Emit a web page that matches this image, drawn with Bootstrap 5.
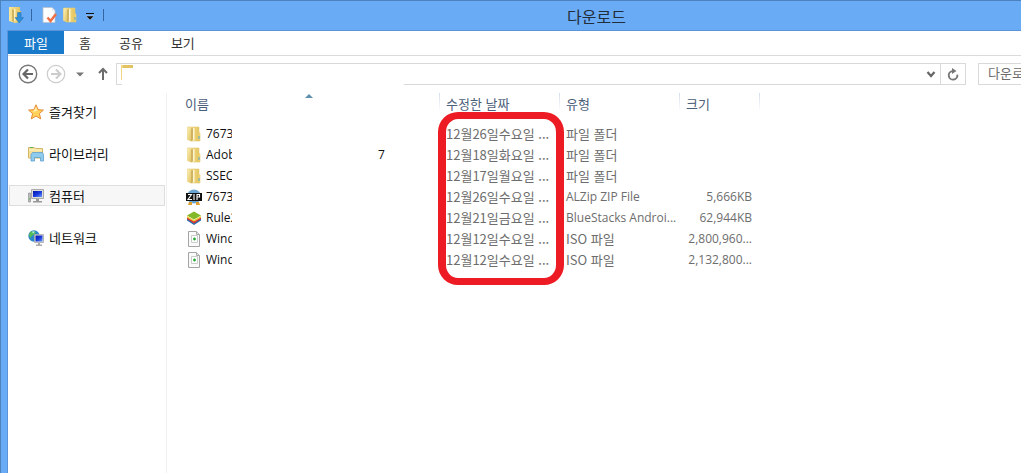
<!DOCTYPE html>
<html lang="ko">
<head>
<meta charset="utf-8">
<meta name="viewport" content="width=device-width, initial-scale=1">
<title>다운로드</title>
<link href="https://cdn.jsdelivr.net/npm/bootstrap@5.3.0/dist/css/bootstrap.min.css" rel="stylesheet">
<style>
  body { font: 13px/21px "Noto Sans CJK KR", sans-serif; color: #111; overflow: hidden; }
  .latin { font-family: "Open Sans", "Noto Sans CJK KR", sans-serif; font-size: 12px; }
  .explorer { background: #6aabf6; border-top: 1px solid #4c82bd; border-left: 1px solid #4c82bd; padding-left: 6px; }
  .titlebar { height: 29px; padding-left: 1px; }
  .titlebar h1 { font-size: 16px; font-weight: 400; line-height: 26px; color: #222d3a; padding-left: 457px; }
  .titlebar svg, .sidebar svg, .files svg, .toolbar svg { display: block; flex: none; }
  .quick { padding-bottom: 1px; }
  .quick-divider { width: 1px; height: 12px; margin: 0 6px 0 7px; background: #35669f; }
  .quick button + .quick-divider { margin-left: 5px; }
  .quick button, .toolbar button { border: 0; background: none; padding: 0; }
  .pane { border-left: 1px solid #5b94d8; border-top: 1px solid #5b94d8; }
  .ribbon { height: 25px; border-bottom: 1px solid #dadbdc; }
  .ribbon button { border: 0; background: none; padding: 0; height: 23px; line-height: 20px; color: #333; }
  .ribbon .file-tab { width: 56px; background: #1979ca; color: #fff; }
  .ribbon .first-tab { margin-left: 15px; }
  .toolbar { height: 37px; padding: 7px 0 8px 10px; }
  .toolbar .recent { margin: 0 14px 0 10px; }
  .address { height: 22px; border: 1px solid #d9d9d9; }
  .address input { border: 0; outline: 0; background: none; min-width: 0; }
  /* blanked part of the path */
  .address::after { content: ""; position: absolute; left: 5px; top: 4px; bottom: -1px; width: 282px; background: #fff; }
  .address .refresh { width: 25px; border-left: 1px solid #d9d9d9; }
  .searchbox { width: 43px; height: 22px; margin-left: 12px; border: 1px solid #d9d9d9; border-right: 0; padding: 0 0 3px 9px; color: #6d6d6d; outline: 0; }
  .searchbox::placeholder { color: #6d6d6d; opacity: 1; }
  .sidebar { width: 159px; border-right: 1px solid #f1f1f1; padding: 8px 1px 0 1px; gap: 21px; }
  .sidebar a { height: 21px; line-height: 19px; border: 1px solid transparent; padding-left: 18px; gap: 5px; color: #111; text-decoration: none; }
  .sidebar a.current { background: #f7f7f7; border-color: #dedede; }
  .files { table-layout: fixed; width: 593px; }
  .files th, .files td { padding: 0 8px 2px 6px; white-space: nowrap; }
  .files th { height: 31px; padding-bottom: 10px; font-weight: 400; color: #4c607a; background: linear-gradient(#d5dfeb, #fff) right top / 1px 19px no-repeat; }
  .files td { height: 21px; line-height: 19px; color: #6d6d6d; }
  .files td:last-child { padding-left: 0; }
  .files td.latin { padding-right: 2px; }
  .files td.latin.text-end { padding-right: 8px; }
  .files th:first-child { padding-left: 18px; }
  .files td:first-child { padding-left: 19px; color: #111; }
  .sort-mark { left: 138px; top: 1px; }
  .file-name { width: 26px; overflow: hidden; }
  .file-tail { margin-left: 142px; }
  .highlight { left: 271px; top: 19px; width: 126px; height: 173px; border: solid #ed1c24; border-width: 7px 8px; border-radius: 20px; pointer-events: none; }
</style>
</head>
<body>
<svg width="0" height="0" class="position-absolute" aria-hidden="true">
  <defs>
    <linearGradient id="gold"><stop offset="0" stop-color="#f8e69b"/><stop offset="1" stop-color="#e3c25a"/></linearGradient>
    <linearGradient id="flap" y2="1"><stop offset="0" stop-color="#fbf0b4"/><stop offset="1" stop-color="#e2c362"/></linearGradient>
    <linearGradient id="screen" x2="1" y2="1"><stop offset="0" stop-color="#0716a8"/><stop offset=".5" stop-color="#1838dd"/><stop offset="1" stop-color="#6b9cf5"/></linearGradient>
    <symbol id="folder" viewBox="0 0 16 16">
      <path d="M1.500 1H13v5.500l1 .5v8H5l-3.500-1.500z" fill="url(#gold)" stroke="#e3c974" stroke-width=".6"/>
      <path d="M1.500 1.500H5V15l-3.500-1.500z" fill="url(#flap)"/><path d="M5 2.500L7 2v11.500L5 15.500z" fill="#cfb360"/>
      <path d="M7 2h1.500v12.500H7z" fill="#fdf6d4"/>
      <path d="M12.500 7H14v7h-1.500z" fill="#eed272"/><path d="M12.500 10h1v3h-1z" fill="#55a5d0"/>
    </symbol>
    <symbol id="disc" viewBox="0 0 16 16">
      <path d="M2.500.5h8l3 3v12h-11z" fill="#fafafa" stroke="#a5a5a5"/><path d="M10.500.5v3h3" fill="#ddd" stroke="#aaa"/>
      <path d="M5.500 4.500h6v7h-6z" fill="#fff" stroke="#ccc"/><path d="M7 8h3M8.500 6.500v3" stroke="#2eab3b" stroke-width="1.300"/>
    </symbol>
  </defs>
</svg>

<div class="explorer min-vh-100 d-flex flex-column">
  <header class="titlebar d-flex align-items-center">
    <div class="quick d-flex align-items-center">
      <svg width="16" height="18" viewBox="0 0 16 18"><path d="M1 1h11v4h1v11l-6 1-6-2z" fill="url(#gold)"/><path d="M4 3l2 1v12l-2-1z" fill="#cfb360"/><path d="M6 3h1.500v12H6z" fill="#fbf0bb"/><path d="M9.500 6.500h3.500v5h2.500L11.200 17 7 11.500h2.500z" fill="#2d8fdc" stroke="#1c6cb0" stroke-width=".5"/></svg>
      <span class="quick-divider"></span>
      <button class="ms-1" aria-label="속성"><svg width="16" height="16" viewBox="0 0 16 16"><path d="M1 .5h9l3 3v12H1z" fill="#fdfdfd" stroke="#b9c3ce" stroke-width=".8"/><path d="M10 .5v3h3" fill="#dde3ea"/><path d="M5.500 10.500l3 3.500 5.500-7" fill="none" stroke="#ef7046" stroke-width="2.500"/></svg></button>
      <button class="ms-1" aria-label="새 폴더"><svg width="16" height="16"><use href="#folder"/></svg></button>
      <button class="ms-1 pt-1" aria-label="빠른 실행 도구 모음"><svg width="16" height="8" viewBox="0 0 16 8"><path d="M4 .5h8" stroke="#111"/><path d="M4 3h8L8 7z" fill="#111" stroke="#dbeafa" stroke-width=".4"/></svg></button>
      <span class="quick-divider"></span>
    </div>
    <h1 class="m-0 text-nowrap">다운로드</h1>
  </header>

  <div class="pane bg-white flex-grow-1 d-flex flex-column">
    <nav class="ribbon d-flex" aria-label="리본">
      <button class="file-tab">파일</button>
      <button class="first-tab">홈</button>
      <button class="ms-4 ps-1">공유</button>
      <button class="ms-4 ps-1">보기</button>
    </nav>

    <div class="toolbar d-flex align-items-center">
      <button aria-label="뒤로"><svg width="20" height="20" viewBox="0 0 20 20" fill="none"><circle cx="10" cy="10" r="8.700" stroke="#777" stroke-width="1.400"/><path d="M15 10H6M10 5.500L5.500 10l4.500 4.500" stroke="#666" stroke-width="2.200"/></svg></button>
      <button class="ms-2" aria-label="앞으로"><svg width="20" height="20" viewBox="0 0 20 20" fill="none"><circle cx="10" cy="10" r="8.700" stroke="#ccc" stroke-width="1.200"/><path d="M5 10h9M10 5.500l4.500 4.500-4.500 4.500" stroke="#ccc" stroke-width="2"/></svg></button>
      <button class="recent" aria-label="최근 위치"><svg width="8" height="5" viewBox="0 0 8 5"><path d="M0 .5h8l-4 4z" fill="#777"/></svg></button>
      <button aria-label="위로"><svg width="10" height="14" viewBox="0 0 10 14" fill="none" stroke="#6b6b6b" stroke-width="2"><path d="M5 13V2M1 6l4-4 4 4"/></svg></button>
      <div class="address position-relative flex-grow-1 d-flex ms-2">
        <svg width="12" height="18" viewBox="0 0 12 18" class="ms-1"><path d="M0 1h12v3H0z" fill="#e3c262"/><path d="M0 1h2v15H0z" fill="#f0d584"/></svg>
        <input class="flex-grow-1" type="text" aria-label="주소">
        <button aria-label="이전 위치" class="me-1"><svg width="10" height="8" viewBox="0 0 10 8"><path d="M1.500 2L5 6l3.500-4" fill="none" stroke="#666" stroke-width="2.200"/></svg></button>
        <button class="refresh d-flex align-items-center justify-content-center" aria-label="새로 고침"><svg width="12" height="13" viewBox="0 0 12 13"><path d="M6 3a4.300 4.300 0 1 0 4.300 4.300" fill="none" stroke="#777" stroke-width="1.900" transform="rotate(-10 6 7)"/><path d="M5 0l4.500 3L5 6z" fill="#777"/></svg></button>
      </div>
      <input class="searchbox flex-shrink-0" type="text" aria-label="다운로드 검색" placeholder="다운로드 검색">
    </div>

    <main class="d-flex flex-grow-1">
      <nav class="sidebar d-flex flex-column flex-shrink-0" aria-label="탐색 창">
        <a href="#" class="d-flex align-items-center"><svg width="16" height="16" viewBox="0 0 16 16"><path d="M8 .8l2.100 4.900 5.300.4-4 3.500 1.300 5.300L8 12.100l-4.700 2.800 1.300-5.300-4-3.500 5.300-.4z" fill="#ffd25c" stroke="#e58a35"/><path d="M8 3l1.300 3.700L5 8z" fill="#fff0b2"/></svg>즐겨찾기</a>
        <a href="#" class="d-flex align-items-center"><svg width="16" height="16" viewBox="0 0 16 16"><path d="M.5 3V1.500h6l1 1h7V12H.5z" fill="#f5e19a" stroke="#d2b568"/><path d="M2 1.500h3" stroke="#57b45c"/><path d="M1 4h13" stroke="#fff4c5"/><path d="M3 8.500l1.500-2h10l1 2V15h-3v-3.500h-6V15H3z" fill="#8fcbed" stroke="#5f9fcb" stroke-width=".8"/></svg>라이브러리</a>
        <a href="#" class="current d-flex align-items-center" aria-current="page"><svg width="16" height="16" viewBox="0 0 16 16"><path d="M.5 5h2v9h-2z" fill="#bbb" stroke="#888" stroke-width=".6"/><path d="M1 11h1" stroke="#43bc43"/><path d="M3.500 1.500h12v9h-12z" fill="#ddd" stroke="#aaa"/><path d="M5 3h9v6H5z" fill="url(#screen)"/><path d="M8 11h3v2H8zM5 13h9v1.500H5z" fill="#999"/></svg>컴퓨터</a>
        <a href="#" class="d-flex align-items-center"><svg width="16" height="16" viewBox="0 0 16 16"><circle cx="6" cy="6" r="5.700" fill="#2a87cc"/><path d="M2 2l4-1 2 2-3 2-3 3-1-3zM6 8l3 1-2 3z" fill="#55bd57"/><path d="M4 1.500l3 0-2 2z" fill="#c4edf3"/><path d="M6.500 4.500h9v8h-9z" fill="#ddd" stroke="#aaa" stroke-width=".8"/><path d="M7.500 5.500h7v6h-7z" fill="url(#screen)"/><path d="M10 13h2v1.500h2V16H8v-1.500h2z" fill="#aaa"/></svg>네트워크</a>
      </nav>

      <section class="position-relative flex-grow-1">
        <svg class="sort-mark position-absolute" width="8" height="4" viewBox="0 0 8 4"><path d="M4 0l4 4H0z" fill="#5f8fab"/></svg>
        <table class="files">
          <colgroup><col style="width:273px"><col style="width:120px"><col style="width:120px"><col style="width:80px"></colgroup>
          <thead><tr><th scope="col">이름</th><th scope="col">수정한 날짜</th><th scope="col">유형</th><th scope="col">크기</th></tr></thead>
          <tbody>
            <tr><td><div class="d-flex align-items-center gap-1"><svg width="16" height="16"><use href="#folder"/></svg><span class="file-name latin">7673</span></div></td><td>12월26일수요일 ...</td><td>파일 폴더</td><td></td></tr>
            <tr><td><div class="d-flex align-items-center gap-1"><svg width="16" height="16"><use href="#folder"/></svg><span class="file-name latin">Adob</span><span class="file-tail latin">7</span></div></td><td>12월18일화요일 ...</td><td>파일 폴더</td><td></td></tr>
            <tr><td><div class="d-flex align-items-center gap-1"><svg width="16" height="16"><use href="#folder"/></svg><span class="file-name latin">SSEC</span></div></td><td>12월17일월요일 ...</td><td>파일 폴더</td><td></td></tr>
            <tr><td><div class="d-flex align-items-center gap-1"><svg width="16" height="16" viewBox="0 0 16 16"><circle cx="8" cy="7.500" r="7" fill="#6ba5d2"/><path d="M3 13h3v3H2zM10 13h3l1 3h-4z" fill="#e0a02e"/><path d="M0 4h16v8H0z" fill="#111"/><path d="M2 5.500h3.500L2 10.500h4M8 5v6M11 11V5.500h2.500v2.500H11" fill="none" stroke="#fff" stroke-width="1.100"/></svg><span class="file-name latin">7673</span></div></td><td>12월26일수요일 ...</td><td class="latin">ALZip ZIP File</td><td class="latin text-end">5,666KB</td></tr>
            <tr><td><div class="d-flex align-items-center gap-1"><svg width="16" height="16" viewBox="0 0 16 16"><path d="M1 8l7 4 7-4v2.500L8 15l-7-4.500z" fill="#296fb5"/><path d="M1 7l7 4 7-4v2l-7 4.500L1 9z" fill="#d83a32"/><path d="M1 6l7 4 7-4v1.500l-7 4-7-4z" fill="#f1cf37"/><path d="M1 5.500L8 1.500l7 4-7 4z" fill="#83b928"/></svg><span class="file-name latin">Rule2</span></div></td><td>12월21일금요일 ...</td><td class="latin">BlueStacks Androi...</td><td class="latin text-end">62,944KB</td></tr>
            <tr><td><div class="d-flex align-items-center gap-1"><svg width="16" height="16"><use href="#disc"/></svg><span class="file-name latin">Wind</span></div></td><td>12월12일수요일 ...</td><td>ISO 파일</td><td class="latin text-end">2,800,960...</td></tr>
            <tr><td><div class="d-flex align-items-center gap-1"><svg width="16" height="16"><use href="#disc"/></svg><span class="file-name latin">Wind</span></div></td><td>12월12일수요일 ...</td><td>ISO 파일</td><td class="latin text-end">2,132,800...</td></tr>
          </tbody>
        </table>
        <div class="highlight position-absolute"></div>
      </section>
    </main>
  </div>
</div>
<script src="https://cdn.jsdelivr.net/npm/bootstrap@5.3.0/dist/js/bootstrap.bundle.min.js"></script>
</body>
</html>
